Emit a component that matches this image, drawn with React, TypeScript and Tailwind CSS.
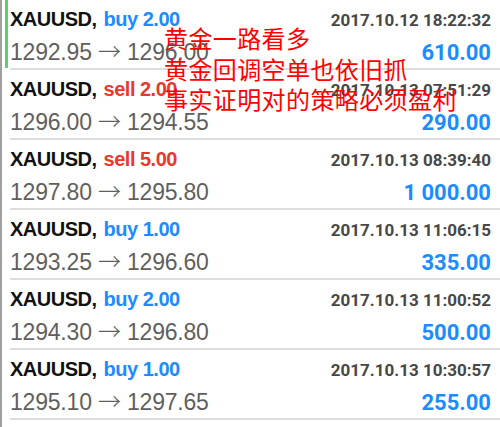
import React from "react";

type Trade = {
  side: "buy" | "sell";
  lots: string;
  open: string;
  close: string;
  time: string;
  profit: string;
};

const trades: Trade[] = [
  { side: "buy", lots: "2.00", open: "1292.95", close: "1296.00", time: "2017.10.12 18:22:32", profit: "610.00" },
  { side: "sell", lots: "2.00", open: "1296.00", close: "1294.55", time: "2017.10.13 07:51:29", profit: "290.00" },
  { side: "sell", lots: "5.00", open: "1297.80", close: "1295.80", time: "2017.10.13 08:39:40", profit: "1 000.00" },
  { side: "buy", lots: "1.00", open: "1293.25", close: "1296.60", time: "2017.10.13 11:06:15", profit: "335.00" },
  { side: "buy", lots: "2.00", open: "1294.30", close: "1296.80", time: "2017.10.13 11:00:52", profit: "500.00" },
  { side: "buy", lots: "1.00", open: "1295.10", close: "1297.65", time: "2017.10.13 10:30:57", profit: "255.00" },
];

function Row({ t, active }: { t: Trade; active: boolean }) {
  return (
    <div className="flex h-[70px]">
      <div className="w-[8px] shrink-0 pb-[2px] pl-[3px]">
        {active && <div className="h-full w-[3px] bg-[#4cd964]" />}
      </div>
      <div className="flex-1 border-b-2 border-[#dedede] pr-[9px] pt-[7px]">
        <div className="flex items-baseline justify-between">
          <div className="text-[20px] leading-[24px] font-bold tracking-[-0.5px] text-[#111]" style={{ fontFamily: '"Liberation Sans", Arial, sans-serif' }}>
            XAUUSD,{" "}
            <span className={t.side === "buy" ? "ml-[2px] text-[#1a8cff]" : "ml-[2px] text-[#e8392e]"}>
              {t.side} {t.lots}
            </span>
          </div>
          <div className="text-[17px] leading-[24px] font-bold text-[#474747]" style={{ fontFamily: 'Roboto, "Liberation Sans", sans-serif' }}>
            {t.time}
          </div>
        </div>
        <div className="mt-[4px] flex items-baseline justify-between">
          <div className="text-[23px] leading-[28px] text-[#5f5f5f] tracking-[-0.2px]" style={{ fontFamily: '"Liberation Sans", Arial, sans-serif' }}>
            {t.open}{" "}
            <span className="font-light" style={{ fontFamily: '"Noto Sans CJK SC", sans-serif' }}>→</span>
            {" "}{t.close}
          </div>
          <div className="text-[22px] leading-[28px] font-bold text-[#1a8cff]" style={{ fontFamily: 'Roboto, "Liberation Sans", sans-serif' }}>
            {t.profit}
          </div>
        </div>
      </div>
    </div>
  );
}

export default function App() {
  return (
    <div className="relative flex h-[427px] w-[500px] overflow-hidden bg-white">
      <div className="w-[2px] shrink-0 bg-[#a0a0a0]" />
      <div className="flex-1">
        {trades.map((t, i) => (
          <Row key={i} t={t} active={i === 0} />
        ))}
      </div>
      <div
        className="absolute left-[164px] top-[23px] text-[24px] leading-[30.5px] tracking-[0.4px] text-[#ff0000]"
        style={{ fontFamily: '"Noto Sans CJK SC", sans-serif' }}
      >
        <div>黄金一路看多</div>
        <div>黄金回调空单也依旧抓</div>
        <div>事实证明对的策略必须盈利</div>
      </div>
    </div>
  );
}
